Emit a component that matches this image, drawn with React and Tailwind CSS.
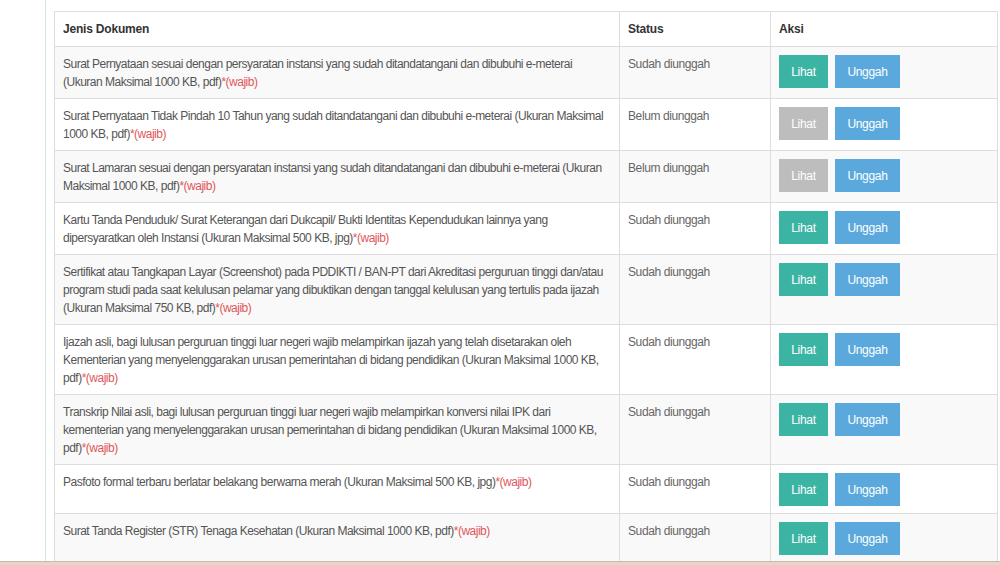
import React from 'react'

const documents = [
  { name: 'Surat Pernyataan sesuai dengan persyaratan instansi yang sudah ditandatangani dan dibubuhi e-meterai (Ukuran Maksimal 1000 KB, pdf)', uploaded: true },
  { name: 'Surat Pernyataan Tidak Pindah 10 Tahun yang sudah ditandatangani dan dibubuhi e-meterai (Ukuran Maksimal 1000 KB, pdf)', uploaded: false },
  { name: 'Surat Lamaran sesuai dengan persyaratan instansi yang sudah ditandatangani dan dibubuhi e-meterai (Ukuran Maksimal 1000 KB, pdf)', uploaded: false },
  { name: 'Kartu Tanda Penduduk/ Surat Keterangan dari Dukcapil/ Bukti Identitas Kependudukan lainnya yang dipersyaratkan oleh Instansi (Ukuran Maksimal 500 KB, jpg)', uploaded: true },
  { name: 'Sertifikat atau Tangkapan Layar (Screenshot) pada PDDIKTI / BAN-PT dari Akreditasi perguruan tinggi dan/atau program studi pada saat kelulusan pelamar yang dibuktikan dengan tanggal kelulusan yang tertulis pada ijazah (Ukuran Maksimal 750 KB, pdf)', uploaded: true },
  { name: 'Ijazah asli, bagi lulusan perguruan tinggi luar negeri wajib melampirkan ijazah yang telah disetarakan oleh Kementerian yang menyelenggarakan urusan pemerintahan di bidang pendidikan (Ukuran Maksimal 1000 KB, pdf)', uploaded: true },
  { name: 'Transkrip Nilai asli, bagi lulusan perguruan tinggi luar negeri wajib melampirkan konversi nilai IPK dari kementerian yang menyelenggarakan urusan pemerintahan di bidang pendidikan (Ukuran Maksimal 1000 KB, pdf)', uploaded: true },
  { name: 'Pasfoto formal terbaru berlatar belakang berwarna merah (Ukuran Maksimal 500 KB, jpg)', uploaded: true },
  { name: 'Surat Tanda Register (STR) Tenaga Kesehatan (Ukuran Maksimal 1000 KB, pdf)', uploaded: true },
]

function App() {
  return (
    <div className="h-[565px] w-[1000px] overflow-hidden flex flex-col bg-white font-['Liberation_Sans',Arial,sans-serif] text-[12px] leading-[18px]">
      <div className="flex-1 flex overflow-hidden">
        {/* Sidebar edge */}
        <div className="w-[46px] shrink-0 border-r border-[#d7e4ec]" />

        {/* Tabel dokumen */}
        <div className="pl-[8px] pt-[11px]">
          <table className="table-fixed border-collapse w-[943px]">
            <colgroup>
              <col className="w-[565px]" />
              <col className="w-[151px]" />
              <col className="w-[227px]" />
            </colgroup>
            <thead>
              <tr className="bg-white">
                <th className="border border-[#dddddd] text-left font-bold text-[#333] px-2 pt-2 pb-2 tracking-[-0.2px]">Jenis Dokumen</th>
                <th className="border border-[#dddddd] text-left font-bold text-[#333] px-2 pt-2 pb-2 tracking-[-0.2px]">Status</th>
                <th className="border border-[#dddddd] text-left font-bold text-[#333] px-2 pt-2 pb-2 tracking-[-0.2px]">Aksi</th>
              </tr>
            </thead>
            <tbody>
              {documents.map((doc, i) => (
                <tr key={i} className={i % 2 === 0 ? 'bg-[#f9f9f9]' : 'bg-white'}>
                  <td className="border border-[#dddddd] align-top px-2 pt-2 pb-[7px] text-[#555] tracking-[-0.5px]">
                    {doc.name}
                    <span className="text-[#e0575a]">*(wajib)</span>
                  </td>
                  <td className="border border-[#dddddd] align-top px-2 pt-2 pb-[7px] text-[#666] tracking-[-0.4px]">
                    {doc.uploaded ? 'Sudah diunggah' : 'Belum diunggah'}
                  </td>
                  <td className="border border-[#dddddd] align-top px-2 pt-2 pb-[7px]">
                    <div className="flex gap-[7px]">
                      <button
                        className={`h-[33px] w-[49px] text-white text-[12px] tracking-[-0.3px] ${doc.uploaded ? 'bg-[#3cb4a4]' : 'bg-[#bdbdbd]'}`}
                      >
                        Lihat
                      </button>
                      <button className="h-[33px] w-[65px] text-white text-[12px] tracking-[-0.3px] bg-[#5ba9dc]">
                        Unggah
                      </button>
                    </div>
                  </td>
                </tr>
              ))}
            </tbody>
          </table>
        </div>
      </div>

      {/* Garis bawah */}
      <div className="h-[4px] shrink-0 bg-[#e6d6c9] border-t border-[#cdb8a8]" />
    </div>
  )
}

export default App
